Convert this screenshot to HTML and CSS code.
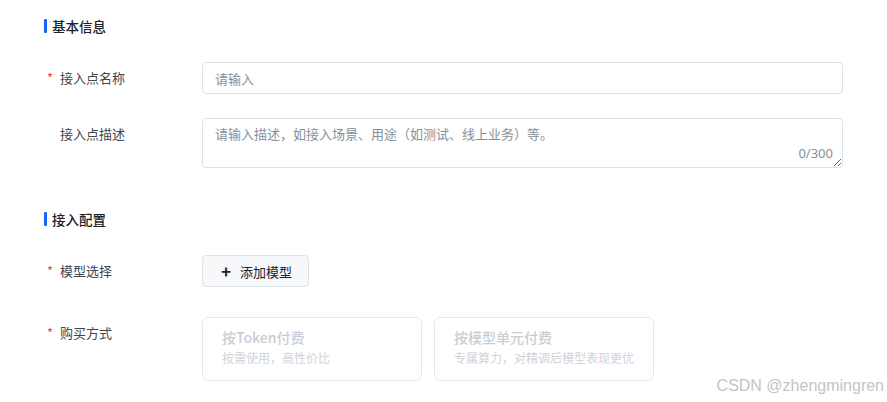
FILE: index.html
```html
<!DOCTYPE html>
<html lang="zh">
<head>
<meta charset="utf-8">
<link rel="stylesheet" href="styles.css">
</head>
<body>
<div class="page">
  <div class="section-title title-first"><span class="bar"></span>基本信息</div>
  <div class="row row-name">
    <div class="label"><span class="star">*</span>接入点名称</div>
    <div class="field"><input class="input" type="text" placeholder="请输入"></div>
  </div>
  <div class="row row-desc">
    <div class="label label-top"><span class="star"></span>接入点描述</div>
    <div class="field textarea-wrap">
      <textarea class="textarea" placeholder="请输入描述，如接入场景、用途（如测试、线上业务）等。"></textarea>
      <span class="counter">0/300</span>
    </div>
  </div>
  <div class="section-title title-second"><span class="bar"></span>接入配置</div>
  <div class="row row-model">
    <div class="label"><span class="star">*</span>模型选择</div>
    <div class="field"><button class="btn"><span class="plus">+</span>添加模型</button></div>
  </div>
  <div class="row row-buy">
    <div class="label label-top2"><span class="star">*</span>购买方式</div>
    <div class="field cards">
      <div class="card">
        <div class="card-title">按Token付费</div>
        <div class="card-sub">按需使用，高性价比</div>
      </div>
      <div class="card">
        <div class="card-title">按模型单元付费</div>
        <div class="card-sub">专属算力，对精调后模型表现更优</div>
      </div>
    </div>
  </div>
  <div class="watermark">CSDN @zhengmingren</div>
</div>
</body>
</html>
```

FILE: styles.css
```css
* { box-sizing: border-box; }
html, body { margin: 0; padding: 0; background: #fff; }
body {
  font-family: "Noto Sans CJK SC", "Noto Sans", sans-serif;
  color: #1d2129;
  width: 887px;
  height: 402px;
  overflow: hidden;
}
.page {
  position: relative;
  padding: 16px 44px 0 44px;
  height: 402px;
}
.section-title {
  display: flex;
  align-items: center;
  height: 20px;
  font-size: 13.5px;
  font-weight: 500;
  color: #1d2129;
  line-height: 20px;
}
.bar {
  width: 3px;
  height: 14px;
  background: #1664ff;
  border-radius: 1px;
  margin-right: 5px;
}
.title-first { margin-bottom: 26px; }
.title-second { margin-top: 41px; margin-bottom: 26px; }
.row { display: flex; align-items: flex-start; }
.row-name { margin-bottom: 24px; align-items: center; }
.row-model { align-items: center; margin-bottom: 30px; }
.label {
  width: 158px;
  flex: none;
  display: flex;
  align-items: center;
  font-size: 13px;
  color: #42464e;
  line-height: 20px;
}
.label-top { padding-top: 6px; }
.label-top2 { padding-top: 6px; }
.star {
  display: inline-block;
  width: 16px;
  padding-left: 3px;
  color: #f53f3f;
  font-size: 13px;
}
.field { flex: 1; min-width: 0; }
.input {
  width: 100%;
  height: 32px;
  border: 1px solid #dde2e9;
  border-radius: 4px;
  padding: 0 12px;
  font-family: inherit;
  font-size: 13px;
  color: #1d2129;
  outline: none;
  background: #fff;
}
.input::placeholder, .textarea::placeholder { color: #86909c; }
.textarea-wrap { position: relative; }
.textarea {
  display: block;
  width: 100%;
  height: 50px;
  border: 1px solid #dde2e9;
  border-radius: 4px;
  padding: 5px 12px;
  font-family: inherit;
  font-size: 13px;
  line-height: 20px;
  color: #1d2129;
  outline: none;
  resize: vertical;
}
.counter {
  position: absolute;
  right: 10px;
  bottom: 6px;
  font-size: 13px;
  line-height: 18px;
  color: #86909c;
  font-family: "Noto Sans", sans-serif;
}
.btn {
  display: inline-flex;
  align-items: center;
  height: 32px;
  padding: 0 16px 0 18px;
  border: 1px solid #dde2e9;
  border-radius: 4px;
  background: #f6f8fa;
  font-family: inherit;
  font-size: 13px;
  color: #1d2129;
  white-space: nowrap;
}
.plus {
  font-size: 17px;
  font-weight: 700;
  margin-right: 9px;
  line-height: 1;
  margin-top: -2px;
}
.cards { display: flex; gap: 12px; }
.card {
  width: 220px;
  height: 64px;
  border: 1px solid #e5e8ee;
  border-radius: 6px;
  padding: 8px 19px 0;
}
.card-title {
  font-size: 14px;
  font-weight: 500;
  color: #c9cdd4;
  line-height: 22px;
}
.card-sub {
  font-size: 12px;
  color: #d0d3d9;
  line-height: 20px;
}
.watermark {
  position: absolute;
  right: 3px;
  bottom: 6px;
  font-family: "Liberation Sans", Arial, sans-serif;
  font-size: 16px;
  color: #c4c4c4;
  line-height: 20px;
}
```
